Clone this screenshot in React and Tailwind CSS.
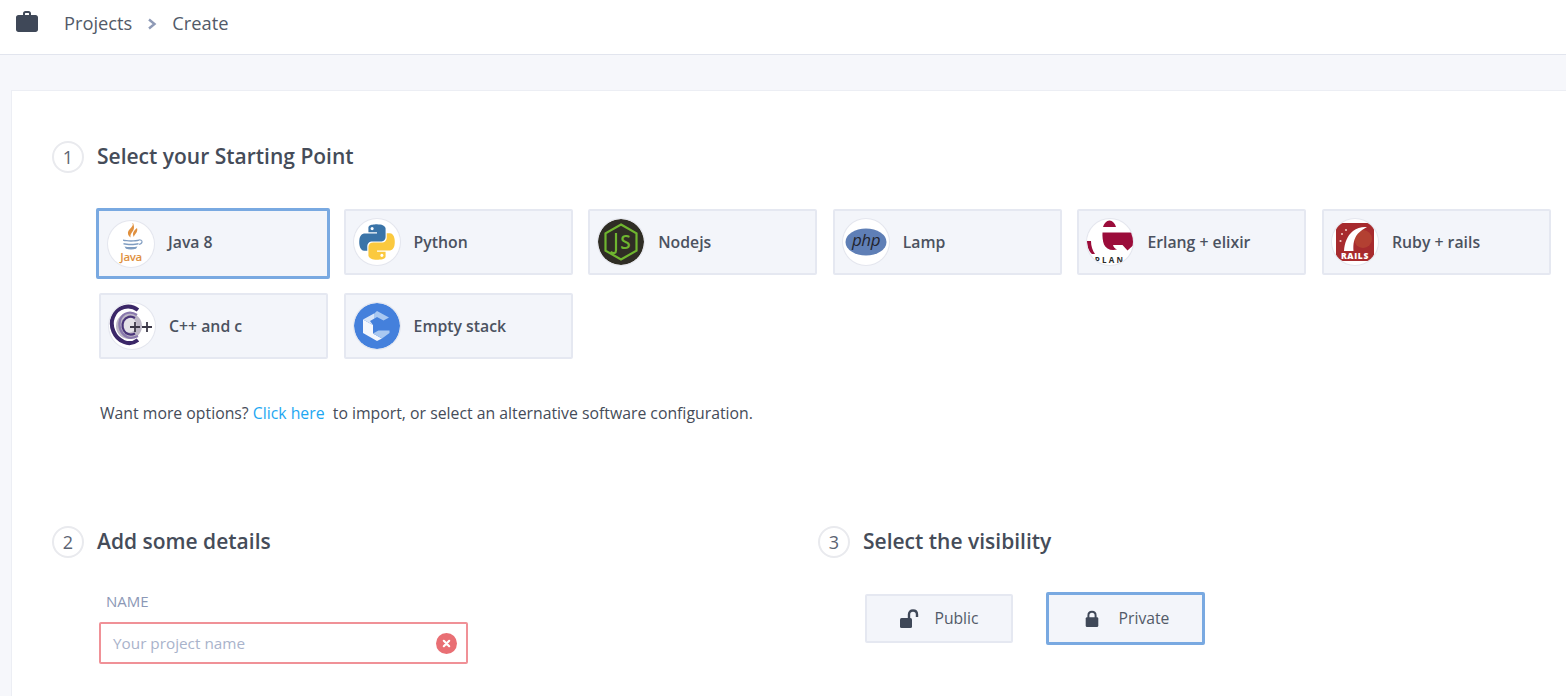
const JavaLogo = () => (
  <svg viewBox="0 0 46 46" className="w-full h-full">
    <path d="M24.500 2c2 4-5.500 6-4.500 11 .3 1.500 1.500 2.700 2.500 3.500-.5-3 1-4.500 2-6 1-1.500 2.500-3.500.5-8.500zM29 7c-2 1.500-4 3.500-4 6 0 1.300.5 2.300 1 3-.2-2.500 4.500-4.500 3-9z" fill="#e0903e" />
    <path d="M15 18.500c3.500 1 12.500 1 16 0v1.300c-3.500 1.200-12.500 1.200-16 0zM15.500 22c3.500 1 11.500 1 15 0v1.500c-3.500 1-11.500 1-15 0zM16.500 25.500c3.500.8 9.500.8 13 0l-1.500 2.300c-3 .8-7 .8-10 0z" fill="#7f9cc0" />
    <path d="M31 19c3.500-.6 4.500 3 0 4.500" fill="none" stroke="#8ba5c6" strokeWidth="1.200" />
    <text x="23" y="40" textAnchor="middle" fontSize="11.500" fontWeight="600" fill="#e0903e" fontFamily="'Open Sans',sans-serif" letterSpacing="-0.4">Java</text>
  </svg>
);

const PythonLogo = () => (
  <svg viewBox="-3.600 -3.600 31.200 31.200" className="w-full h-full">
    <path fill="#3a74a8" fillRule="evenodd" d="M14.25.18l.9.2.73.26.59.3.45.32.34.34.25.34.16.33.1.3.04.26.02.2-.01.13V8.500l-.05.63-.13.55-.21.46-.26.38-.3.31-.33.25-.35.19-.35.14-.33.1-.3.07-.26.04-.21.02H8.770l-.69.05-.59.14-.5.22-.41.27-.33.32-.27.35-.2.36-.15.37-.1.35-.07.32-.04.27-.02.21v3.060H3.170l-.21-.03-.28-.07-.32-.12-.35-.18-.36-.26-.36-.36-.35-.46-.32-.59-.28-.73-.21-.88-.14-1.050-.05-1.230.06-1.220.16-1.040.24-.87.32-.71.36-.57.4-.44.42-.33.42-.24.4-.16.36-.1.32-.05.24-.01h.16l.06.01h8.160v-.83H6.180l-.01-2.750-.02-.37.05-.34.11-.31.17-.28.25-.26.31-.23.38-.2.44-.18.51-.15.58-.12.64-.1.71-.06.77-.04.84-.02 1.270.05zm-6.300 1.980l-.23.33-.08.41.08.41.23.34.33.22.41.09.41-.09.33-.22.23-.34.08-.41-.08-.41-.23-.33-.33-.22-.41-.09-.41.09z" />
    <path fill="#fbc93e" fillRule="evenodd" d="M21.040 6.110l.28.06.32.12.35.18.36.27.36.35.35.47.32.59.28.73.21.88.14 1.040.05 1.230-.06 1.230-.16 1.040-.24.86-.32.71-.36.57-.4.45-.42.33-.42.24-.4.16-.36.09-.32.05-.24.02-.16-.01h-8.220v.82h5.840l.01 2.760.02.36-.05.34-.11.31-.17.29-.25.25-.31.24-.38.2-.44.17-.51.15-.58.13-.64.09-.71.07-.77.04-.84.01-1.270-.04-1.070-.14-.9-.2-.73-.25-.59-.3-.45-.33-.34-.34-.25-.34-.16-.33-.1-.3-.04-.25-.02-.2.01-.13v-5.340l.05-.64.13-.54.21-.46.26-.38.3-.32.33-.24.35-.2.35-.14.33-.1.3-.06.26-.04.21-.02.13-.01h5.840l.69-.05.59-.14.5-.21.41-.28.33-.32.27-.35.2-.36.15-.36.1-.35.07-.32.04-.28.02-.21V6.070h2.090l.14.01zm-6.470 14.250l-.23.33-.08.41.08.41.23.33.33.23.41.08.41-.08.33-.23.23-.33.08-.41-.08-.41-.23-.33-.33-.23-.41-.08-.41.08z" />
  </svg>
);

const NodeLogo = () => (
  <svg viewBox="0 0 46 46" className="w-full h-full">
    <circle cx="23" cy="23" r="23" fill="#2f2d25" />
    <path d="M23 5.500l15.500 8.900v17.200L23 40.500 7.500 31.600V14.400z" fill="none" stroke="#6fb52f" strokeWidth="2.200" />
    <path d="M18 14v17c0 3.500-2 4-5.500 2" fill="none" stroke="#6fb52f" strokeWidth="2.200" />
    <text x="27.500" y="29.500" textAnchor="middle" fontSize="19" fontWeight="600" fill="#6fb52f" fontFamily="'Open Sans',sans-serif">S</text>
  </svg>
);

const PhpLogo = () => (
  <svg viewBox="0 0 46 46" className="w-full h-full">
    <ellipse cx="23" cy="23" rx="20.500" ry="13.500" fill="#5f7fb6" />
    <text x="23" y="26.500" textAnchor="middle" fontSize="17" fontStyle="italic" fontWeight="400" fill="#23252e" fontFamily="'Open Sans',sans-serif" letterSpacing="-0.5">php</text>
  </svg>
);

const ErlangLogo = () => (
  <svg viewBox="0 0 46 46" className="w-full h-full">
    <path d="M16 8c1-3.500 3.500-6.500 6.500-6.500S28 4.500 29 8z" fill="#9b0c3a" />
    <path d="M15.500 13.500H46v13l-5.500 5-5-5.500H26c.5 2 2 3.500 4 4.500-6 1.500-11-.5-13-5-1.300-3.500-1.800-8.500-1.500-12z" fill="#9b0c3a" />
    <path d="M0 22c0 5 2 11 5 13h3c-2.500-3.500-4-8-4-13z" fill="#9b0c3a" />
    <text x="23" y="44" textAnchor="middle" fontSize="8" fontWeight="700" fill="#2a2a2a" fontFamily="'Open Sans',sans-serif" letterSpacing="2.200">PLAN</text>
  </svg>
);

const RailsLogo = () => (
  <svg viewBox="0 0 46 46" className="w-full h-full">
    <rect x="4" y="4" width="38" height="38" rx="7" fill="#a72b2e" />
    <circle cx="31" cy="20" r="9" fill="#b84a34" opacity="0.7" />
    <path d="M35 8c-5-.5-10 1-14 4-6 5-8.500 12-9 20h9.500c-.6-7 .5-13 4.500-17.500 2.500-2.500 5.500-4.500 9-6.500z" fill="#fff" />
    <circle cx="10" cy="15" r="1.100" fill="#f0c8c0" />
    <circle cx="14" cy="11" r="1.100" fill="#f0c8c0" />
    <circle cx="8.500" cy="22" r="1.100" fill="#f0c8c0" />
    <text x="23" y="39.500" textAnchor="middle" fontSize="8.500" fontWeight="800" fill="#fff" fontFamily="'Open Sans',sans-serif" letterSpacing="0.700">RAILS</text>
  </svg>
);

const CppLogo = () => (
  <svg viewBox="0 0 46 46" className="w-full h-full">
    <circle cx="20" cy="23" r="13" fill="#bdb7c6" />
    <circle cx="20" cy="22" r="7.500" fill="#e4e2e7" />
    <path d="M29 7C21 1 8 3 4 14c-3.500 9 1 21 11 25 6 2.500 10 1 14-2" fill="none" stroke="#3b2768" strokeWidth="4" />
    <path d="M28 12c-6-4-14-3-17 5-2 7 1 14 7 17 4 2 7 1 11-1" fill="none" stroke="#8a79ad" strokeWidth="2.200" />
    <path d="M26 15c-4-2.500-9-1.500-11.500 3-2 4-1 9 2.500 12 3 2 6 2 9 .5" fill="none" stroke="#4a3579" strokeWidth="2.200" />
    <path d="M21 24h10M26 19v10M33 24h10M38 19v10" fill="none" stroke="#3c3847" strokeWidth="1.800" />
  </svg>
);

const StackLogo = () => (
  <svg viewBox="0 0 46 46" className="w-full h-full">
    <circle cx="23" cy="23" r="23" fill="#4480dc" />
    <path d="M23 8l12 6.500-5.500 3L23 14l-3 1.800v-5z" fill="#a9c8f1" />
    <path d="M9 16.500l10 5.500v8.500l9 5-5 2.500L9 30z" fill="#f4f7fd" />
    <path d="M9 16.500L20 10.500v5.300l-4 2.200 3 4z" fill="#d8e5f8" />
    <path d="M28 35.500l-9-5 5.500-3 11 0V30z" fill="#a9c8f1" />
  </svg>
);

const stacks = [
  { name: "Java 8", Logo: JavaLogo, selected: true },
  { name: "Python", Logo: PythonLogo },
  { name: "Nodejs", Logo: NodeLogo },
  { name: "Lamp", Logo: PhpLogo },
  { name: "Erlang + elixir", Logo: ErlangLogo },
  { name: "Ruby + rails", Logo: RailsLogo },
  { name: "C++ and c", Logo: CppLogo },
  { name: "Empty stack", Logo: StackLogo },
];

const Step = ({ n, title }) => (
  <div className="flex items-center">
    <div className="w-8 h-8 rounded-full border-2 border-[#e9eaee] flex items-center justify-center text-[18px] text-[#5c6472] bg-white shrink-0">{n}</div>
    <h2 className="ml-[13px] mb-[2px] text-[21px] leading-[30px] font-semibold text-[#454c59]">{title}</h2>
  </div>
);

function StackCard({ name, Logo, selected }) {
  return (
    <div
      className={
        selected
          ? "h-[71px] -mt-px -mb-1 -ml-[3px] -mr-[2px] pl-[9px] rounded-[2px] border-[3px] border-[#79a9e1] bg-[#f3f5fa] flex items-center"
          : "h-[66px] pl-[8px] rounded-[2px] border-2 border-[#e5e8f1] bg-[#f3f5fa] flex items-center"
      }
    >
      <div className="w-[46px] h-[46px] rounded-full bg-white ring-1 ring-[#e4e6ee] overflow-hidden shrink-0">
        <Logo />
      </div>
      <span className={selected ? "ml-[14px] mb-[2px] text-[15.800px] font-semibold text-[#4b5260]" : "ml-[14px] mt-[2px] text-[15.800px] font-semibold text-[#4b5260]"}>{name}</span>
    </div>
  );
}

export default function App() {
  return (
    <div className="h-[696px] overflow-hidden bg-[#f6f7fb] font-['Open_Sans',sans-serif]">
      <header className="h-[55px] bg-white border-b border-[#e2e5ee] flex items-center">
        <svg viewBox="0 0 22 22" className="ml-[16px] w-[22px] h-[22px] -mt-[12px] text-[#3f4858]" fill="currentColor">
          <path d="M7 5V3.500C7 2 8 1 9.500 1h3C14 1 15 2 15 3.500V5h4.500C21 5 22 6 22 7.500v12c0 1.500-1 2.500-2.500 2.500h-17C1 22 0 21 0 19.500v-12C0 6 1 5 2.500 5zm2 0h4V3.500c0-.4-.2-.6-.5-.6h-3c-.3 0-.5.2-.5.600z" />
        </svg>
        <span className="ml-[26px] -mt-[8px] text-[18.300px] text-[#525a68]">Projects</span>
        <svg viewBox="0 0 10 12" className="ml-[15px] -mt-[6px] w-[10px] h-[12px]" fill="none" stroke="#8e9ab6" strokeWidth="2.400">
          <path d="M2 1.500L7.500 6 2 10.500" />
        </svg>
        <span className="ml-[15px] -mt-[8px] text-[18.300px] text-[#525a68]">Create</span>
      </header>

      <main className="pt-[35px] pl-[11px]">
        <div className="bg-white border-t border-l border-[#eceef4] pt-[50px] pl-[40px] h-[620px]">
          <Step n="1" title="Select your Starting Point" />
          <div className="mt-[36px] ml-[47px] grid grid-cols-[repeat(6,229px)] gap-x-[15.600px] gap-y-[18px]">
            {stacks.map((s) => (
              <StackCard key={s.name} {...s} />
            ))}
          </div>
          <p className="mt-[44px] ml-[48px] text-[15.800px] leading-5 text-[#454c59]">
            Want more options? <a className="text-[#1ea7f2] font-medium">Click here</a>&nbsp; to import, or select an alternative software configuration.
          </p>

          <div className="mt-[103px] flex">
            <div className="w-[766px]">
              <Step n="2" title="Add some details" />
              <div className="ml-[54px] mt-[33px] text-[15px] leading-5 text-[#8c98b6]">NAME</div>
              <div className="ml-[47px] mt-[11px] w-[369px] h-[42px] rounded-[2px] border-2 border-[#f09197] bg-white flex items-center justify-between pl-[12px] pr-[9px]">
                <span className="text-[15.300px] text-[#a9b3cb]">Your project name</span>
                <div className="w-[21px] h-[21px] rounded-full bg-[#e96f74] flex items-center justify-center">
                  <svg viewBox="0 0 10 10" className="w-[9px] h-[9px]" fill="none" stroke="#fff" strokeWidth="2.400" strokeLinecap="round">
                    <path d="M2 2l6 6M8 2L2 8" />
                  </svg>
                </div>
              </div>
            </div>
            <div>
              <Step n="3" title="Select the visibility" />
              <div className="ml-[47px] mt-[34px] flex items-center">
                <div className="w-[148px] h-[49px] rounded-[2px] border-2 border-[#e5e8f1] bg-[#f3f5fa] flex items-center justify-center">
                  <svg viewBox="0 0 20 20" className="w-[20px] h-[20px] mr-[15px] text-[#3f4858]" fill="currentColor">
                    <rect x="1" y="9" width="12" height="10" rx="1.500" />
                    <path d="M10 9V5.500C10 3 11.500 1.500 14 1.500S18 3 18 5.500V8" fill="none" stroke="currentColor" strokeWidth="2.400" />
                  </svg>
                  <span className="text-[15.700px] text-[#525a68]">Public</span>
                </div>
                <div className="ml-[33px] w-[159px] h-[53px] rounded-[2px] border-[3px] border-[#79a9e1] bg-[#f3f5fa] flex items-center justify-center">
                  <svg viewBox="0 0 16 20" className="ml-[2px] w-[16px] h-[18px] mr-[19px] text-[#3f4858]" fill="currentColor">
                    <rect x="1" y="8" width="14" height="11" rx="1.500" />
                    <path d="M4 9V6c0-2.500 1.500-4 4-4s4 1.500 4 4v3" fill="none" stroke="currentColor" strokeWidth="2.200" />
                  </svg>
                  <span className="text-[15.700px] text-[#525a68]">Private</span>
                </div>
              </div>
            </div>
          </div>
        </div>
      </main>
    </div>
  );
}
